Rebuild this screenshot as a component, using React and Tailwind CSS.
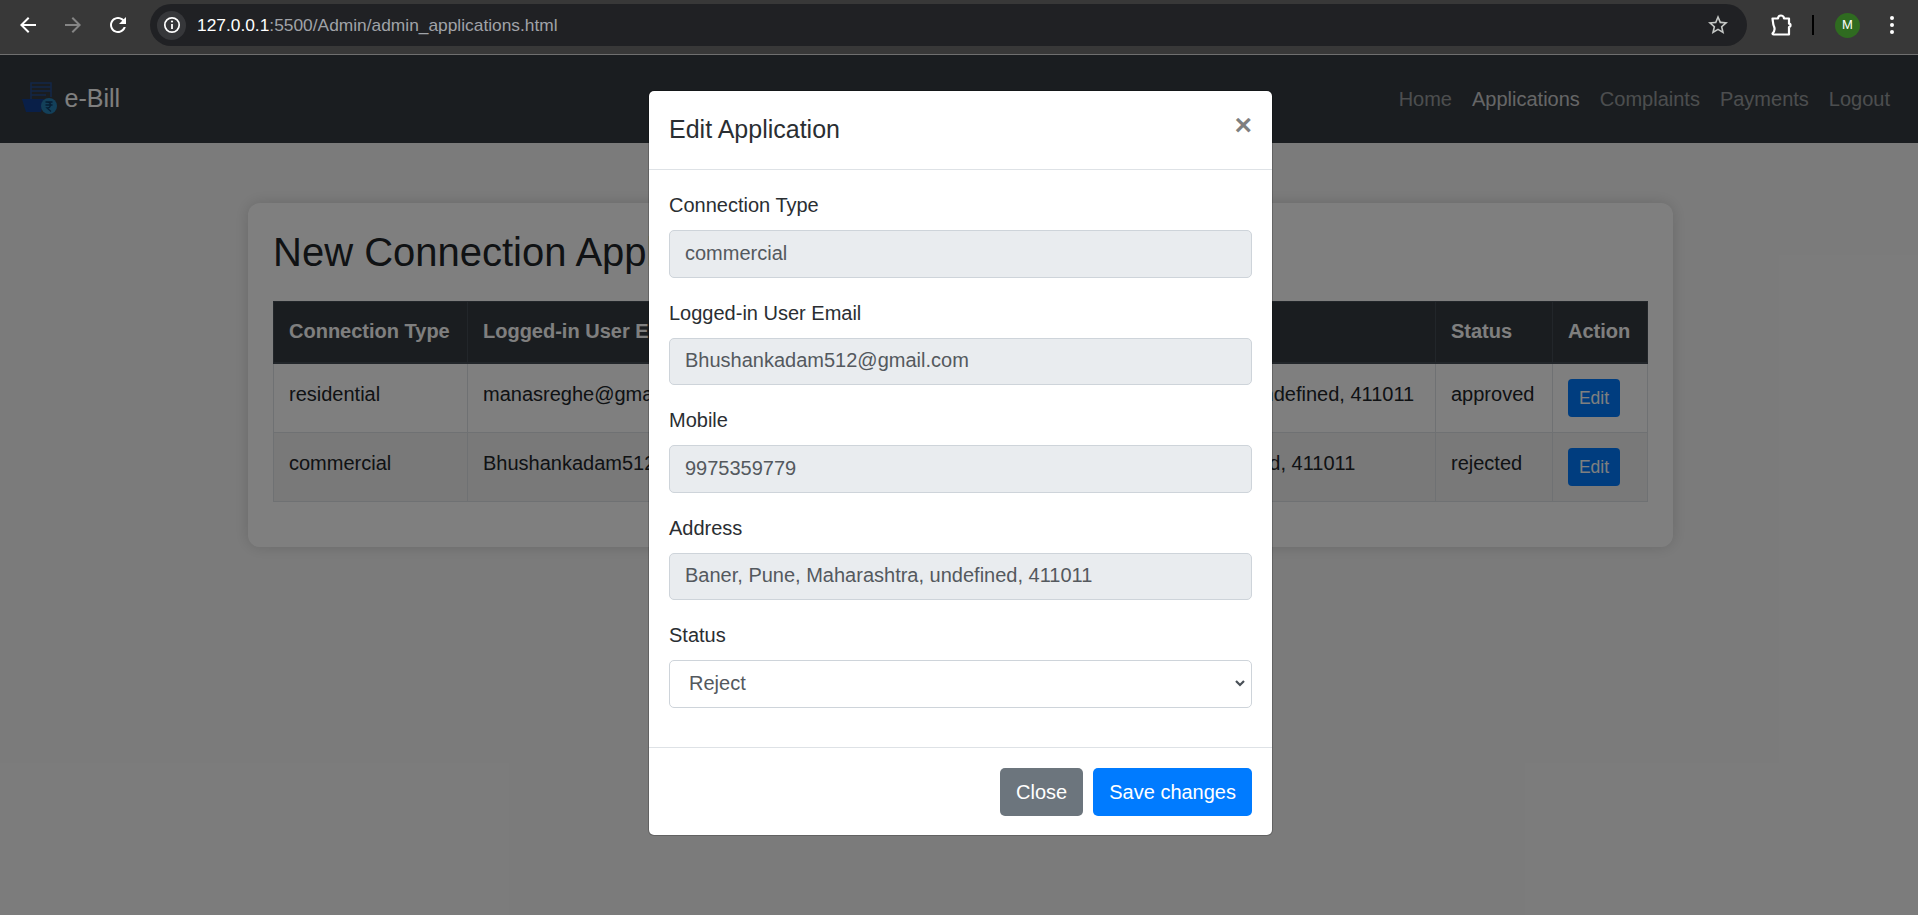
import React from "react";

const font = "font-['Liberation_Sans',Arial,sans-serif]";

function MIcon({ d, className }) {
  return (
    <svg viewBox="0 0 24 24" className={className} fill="currentColor">
      <path d={d} />
    </svg>
  );
}

function Logo() {
  return (
    <svg width="38" height="38" viewBox="0 0 38 38" className="mr-[6.5px]">
      <g fill="none" stroke="#24529f" strokeWidth="1.5" opacity="0.85">
        <path d="M11 19V3h20v14" />
        <path d="M11 7h20M11 11h20M11 15h15" />
      </g>
      <path d="M2 19h22l-3 13H6z" fill="#123f90" />
      <circle cx="29" cy="26" r="8" fill="#2680b4" />
      <path d="M25.5 22h7M25.5 25h7M27 22c4.5 0 4.5 6 0 6l4 3.5" fill="none" stroke="#0e3a64" strokeWidth="1.3" />
    </svg>
  );
}

function BrowserBar() {
  return (
    <div className="h-[54px] bg-[#383838] flex items-center pt-[4px] pb-[8px] pl-[16px]">
      <MIcon className="w-[24px] h-[24px] text-white mr-[21px]" d="M20 11H7.83l5.59-5.59L12 4l-8 8 8 8 1.41-1.41L7.83 13H20v-2z" />
      <MIcon className="w-[24px] h-[24px] text-[#858585] mr-[21px]" d="M4 11h12.17l-5.59-5.59L12 4l8 8-8 8-1.41-1.41L16.17 13H4v-2z" />
      <MIcon className="w-[24px] h-[24px] text-white mr-[20px]" d="M17.65 6.35C16.2 4.9 14.21 4 12 4c-4.42 0-7.99 3.58-7.99 8s3.57 8 7.99 8c3.73 0 6.84-2.55 7.73-6h-2.08c-.82 2.33-3.04 4-5.65 4-3.31 0-6-2.69-6-6s2.69-6 6-6c1.66 0 3.14.69 4.22 1.78L13 11h7V4l-2.35 2.35z" />
      <div className="w-[1597px] h-[42px] rounded-full bg-[#202124] flex items-center pl-[7px] pr-[17px]">
        <div className="w-[29px] h-[29px] rounded-full bg-[#36373a] flex items-center justify-center mr-[11px]">
          <svg viewBox="0 0 20 20" className="w-[20px] h-[20px]" fill="none">
            <circle cx="10" cy="10" r="7.2" stroke="#fff" strokeWidth="1.7" />
            <path d="M10 9v5" stroke="#fff" strokeWidth="1.8" />
            <circle cx="10" cy="6.5" r="1.1" fill="#fff" />
          </svg>
        </div>
        <span className="text-[17.35px] text-[#a0a3a8]">
          <span className="text-white">127.0.0.1</span>:5500/Admin/admin_applications.html
        </span>
        <div className="flex-1" />
        <MIcon className="w-[24px] h-[24px] text-[#c4c7c5]" d="M22 9.24l-7.19-.62L12 2 9.19 8.63 2 9.24l5.46 4.73L5.82 21 12 17.27 18.18 21l-1.63-7.03L22 9.24zM12 15.4l-3.76 2.27 1-4.28-3.32-2.88 4.38-.38L12 6.1l1.71 4.04 4.38.38-3.32 2.88 1 4.28L12 15.4z" />
      </div>
      <svg viewBox="0 0 24 24" className="w-[24px] h-[24px] ml-[22px]" fill="none" stroke="#fff" strokeWidth="2.2" strokeLinejoin="round" strokeLinecap="round">
        <path d="M3.500 5.500H9c0-.5.300-3 3-3s3 2.500 3 3h5v5.200c2 0 2 3.300 0 3.300v7.500H4.500c-.6 0-1-.4-1-1 2.400-2.500 2.400-5 1.500-7-1-1.500-1-5-1.500-8z" />
      </svg>
      <div className="w-[2px] h-[20px] bg-black ml-[19px]" />
      <div className="w-[25px] h-[25px] rounded-full bg-[#2f6b20] text-white text-[13px] flex items-center justify-center ml-[21px]">M</div>
      <div className="flex flex-col gap-[3px] ml-[30px]">
        <div className="w-[4px] h-[4px] rounded-full bg-white" />
        <div className="w-[4px] h-[4px] rounded-full bg-white" />
        <div className="w-[4px] h-[4px] rounded-full bg-white" />
      </div>
    </div>
  );
}

function Navbar() {
  const links = ["Home", "Applications", "Complaints", "Payments", "Logout"];
  return (
    <nav className="h-[88px] bg-[#343a40] flex items-center justify-between pl-[20px] pr-[18px]">
      <a className="flex items-center text-[25px] text-white">
        <Logo />
        <span>e-Bill</span>
      </a>
      <ul className="flex text-[20px]">
        {links.map((l) => (
          <li key={l} className={`px-[10px] ${l === "Applications" ? "text-white/75" : "text-white/50"}`}>{l}</li>
        ))}
      </ul>
    </nav>
  );
}

function Th({ children }) {
  return (
    <th className="border border-[#454d55] border-b-[2px] px-[15px] pt-[14px] pb-[16px] align-top text-left font-bold whitespace-nowrap">
      {children}
    </th>
  );
}

function Td({ children }) {
  return (
    <td className="border border-[#dee2e6] p-[15px] align-top text-left font-normal whitespace-nowrap">
      {children}
    </td>
  );
}

function EditBtn() {
  return (
    <button className="block w-[52px] h-[38px] rounded-[4px] bg-[#007bff] text-white text-[17.5px]">Edit</button>
  );
}

function Page() {
  const rows = [
    { type: "residential", email: "manasreghe@gmail.com", mobile: "9876543210", addr: "Karve Nagar, Pune, Maharashtra, undefined, 411011", status: "approved", bg: "bg-transparent" },
    { type: "commercial", email: "Bhushankadam512@gmail.com", mobile: "9975359779", addr: "Baner, Pune, Maharashtra, undefined, 411011", status: "rejected", bg: "bg-black/5" },
  ];
  return (
    <div className="bg-[#f7f7f7] h-[772px] pt-[60px]">
      <div className="w-[1425px] h-[344px] ml-[248px] bg-white rounded-[12px] p-[25px] shadow-[0_0_15px_rgba(0,0,0,0.15)]">
        <h2 className="text-[40px] leading-[48px] text-[#212529] mb-[25px]">New Connection Applications</h2>
        <table className="w-[1374px] border-collapse text-[20px] leading-[30px] text-[#212529] table-fixed">
          <colgroup>
            <col className="w-[194px]" />
            <col className="w-[305px]" />
            <col className="w-[160px]" />
            <col className="w-[503px]" />
            <col className="w-[117px]" />
            <col className="w-[95px]" />
          </colgroup>
          <thead>
            <tr className="bg-[#343a40] text-white">
              <Th>Connection Type</Th>
              <Th>Logged-in User Email</Th>
              <Th>Mobile</Th>
              <Th>Address</Th>
              <Th>Status</Th>
              <Th>Action</Th>
            </tr>
          </thead>
          <tbody>
            {rows.map((r) => (
              <tr key={r.type} className={`${r.bg} h-[69px]`}>
                <Td>{r.type}</Td>
                <Td>{r.email}</Td>
                <Td>{r.mobile}</Td>
                <Td>{r.addr}</Td>
                <Td>{r.status}</Td>
                <Td><EditBtn /></Td>
              </tr>
            ))}
          </tbody>
        </table>
      </div>
    </div>
  );
}

function Field({ label, value }) {
  return (
    <div className="mb-[20px]">
      <label className="block text-[20px] leading-[30px] mb-[10px] text-[#2a2e32]">{label}</label>
      <div className="h-[47.5px] rounded-[5px] border border-[#ced4da] bg-[#e9ecef] px-[15px] pb-[2px] flex items-center text-[20px] text-[#54595e]">{value}</div>
    </div>
  );
}

function Modal() {
  return (
    <div className="absolute left-[648px] top-[90px] w-[625px] bg-white bg-clip-padding rounded-[6px] border border-black/20 flex flex-col">
      <div className="h-[79px] border-b border-[#dee2e6] flex items-start justify-between px-[20px] pt-[20px]">
        <h5 className="text-[25px] leading-[37px] text-[#2a2e32]">Edit Application</h5>
        <span className="text-[30px] leading-[30px] font-bold text-black/50 mt-[-1px]">×</span>
      </div>
      <div className="px-[20px] pt-[20px] pb-[19.5px]">
        <Field label="Connection Type" value="commercial" />
        <Field label="Logged-in User Email" value="Bhushankadam512@gmail.com" />
        <Field label="Mobile" value="9975359779" />
        <Field label="Address" value="Baner, Pune, Maharashtra, undefined, 411011" />
        <div className="mb-[20px]">
          <label className="block text-[20px] leading-[30px] mb-[10px] text-[#2a2e32]">Status</label>
          <div className="h-[47.5px] rounded-[5px] border border-[#ced4da] bg-white pl-[19px] pr-[5px] pb-[2px] flex items-center justify-between text-[20px] text-[#54595e]">
            <span>Reject</span>
            <svg viewBox="0 0 12 12" className="w-[12px] h-[12px]" fill="none" stroke="#495057" strokeWidth="2.2">
              <path d="M2 4l4 4 4-4" />
            </svg>
          </div>
        </div>
      </div>
      <div className="border-t border-[#dee2e6] flex items-center justify-end gap-[10px] pt-[20px] px-[20px] pb-[19px]">
        <button className="h-[47.5px] px-[16px] rounded-[5px] bg-[#6c757d] text-white text-[20px]">Close</button>
        <button className="h-[47.5px] px-[16px] rounded-[5px] bg-[#007bff] text-white text-[20px]">Save changes</button>
      </div>
    </div>
  );
}

export default function App() {
  return (
    <div className={`${font} w-[1918px] h-[915px] overflow-hidden relative bg-[#f7f7f7]`}>
      <BrowserBar />
      <div className="h-[1px] bg-[#6f6f6f]" />
      <Navbar />
      <Page />
      <div className="absolute left-0 right-0 top-[55px] bottom-0 bg-black/50" />
      <Modal />
    </div>
  );
}
